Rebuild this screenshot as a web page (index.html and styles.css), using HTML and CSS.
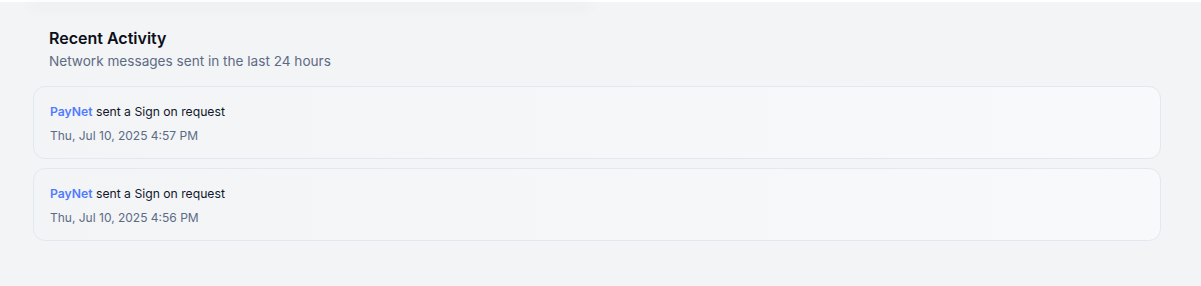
FILE: index.html
```html
<!DOCTYPE html>
<html lang="en">
<head>
    <meta charset="UTF-8">
    <title>Recent Activity</title>
    <link rel="stylesheet" href="styles.css">
</head>
<body>
    <!-- Top edge and the shadow of the card above -->
    <div class="top-edge"></div>
    <div class="above-card"></div>

    <!-- Recent activity section -->
    <div class="activity">
        <div class="activity-header">
            <h3>Recent Activity</h3>
            <p>Network messages sent in the last 24 hours</p>
        </div>

        <div class="activity-list">
            <div class="activity-item">
                <p class="activity-text"><span class="sender">PayNet</span> sent a Sign on request</p>
                <p class="activity-date">Thu, Jul 10, 2025 4:57 PM</p>
            </div>
            <div class="activity-item">
                <p class="activity-text"><span class="sender">PayNet</span> sent a Sign on request</p>
                <p class="activity-date">Thu, Jul 10, 2025 4:56 PM</p>
            </div>
        </div>
    </div>
</body>
</html>
```

FILE: styles.css
```css
html, body {
    margin: 0;
    padding: 0;
    background: #f3f4f6; /* Light gray page */
    font-family: Inter, "Noto Sans", sans-serif;
    color: #0f172a;
}

.top-edge {
    height: 2px;
    background: #ffffff;
}

/* Only the bottom shadow of the card above shows */
.above-card {
    height: 0;
    width: 560px;
    margin-left: 30px;
    box-shadow: 0 4px 14px 2px rgba(0, 0, 0, 0.06);
}

.activity {
    padding: 0 40px 0 33px;
}

.activity-header {
    padding: 26px 16px 0 16px;
}

.activity-header h3 {
    margin: 0;
    font-size: 16px;
    font-weight: 600;
    line-height: 20px;
    color: #0b0f19;
}

.activity-header p {
    margin: 3px 0 0 0;
    font-size: 13.6px;
    line-height: 20px;
    color: #5b6b84;
}

.activity-list {
    display: flex;
    flex-direction: column;
    gap: 9px;
    margin-top: 15px;
}

.activity-item {
    height: 73px;
    box-sizing: border-box;
    padding: 16px 16px 0 16px;
    border: 1px solid #e2e8f0;
    border-radius: 12px;
    background: linear-gradient(90deg, #f3f4f6 0%, #f8f9fb 100%);
}

.activity-text {
    margin: 0;
    font-size: 12.2px;
    line-height: 18px;
    color: #0f172a;
}

.sender {
    color: #4f7cff;
    font-weight: 600;
}

.activity-date {
    margin: 6px 0 0 0;
    font-size: 12px;
    line-height: 18px;
    color: #5b6b84;
}
```
